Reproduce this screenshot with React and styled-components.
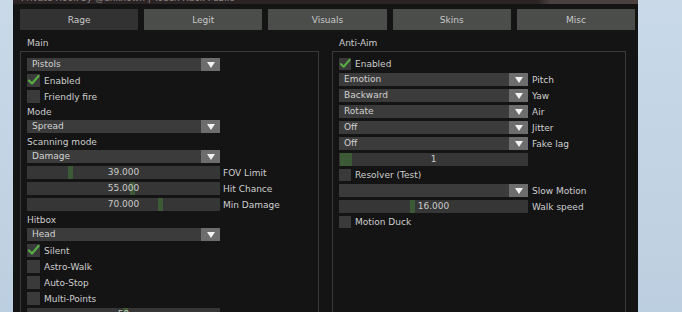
import React from "react";
import styled, { createGlobalStyle } from "styled-components";

const GlobalStyle = createGlobalStyle`
  body {
    margin: 0;
    font-family: "DejaVu Sans", Verdana, sans-serif;
    font-size: 9px;
  }
`;

const TABS = ["Rage", "Legit", "Visuals", "Skins", "Misc"];

export default function App() {
  return (
    <>
      <GlobalStyle />
      <Page>
        <Window>
          <TitleBar>
            <span>Private Hook by @unknown | Touch Hack Public</span>
          </TitleBar>
          <TabBar>
            {TABS.map((t, i) => (
              <Tab key={t} $active={i === 0}>
                {t}
              </Tab>
            ))}
          </TabBar>
          <Columns>
            <Column>
              <GroupTitle>Main</GroupTitle>
              <GroupBox>
                <Combo $w={193} value="Pistols" />
                <CheckBox checked label="Enabled" />
                <CheckBox label="Friendly fire" />
                <FieldLabel>Mode</FieldLabel>
                <Combo $w={193} value="Spread" />
                <FieldLabel>Scanning mode</FieldLabel>
                <Combo $w={193} value="Damage" />
                <Row $gap={3}>
                  <Slider $w={193} thumb={41} value="39.000" />
                  <SideLabel>FOV Limit</SideLabel>
                </Row>
                <Row $gap={3}>
                  <Slider $w={193} thumb={103} value="55.000" />
                  <SideLabel>Hit Chance</SideLabel>
                </Row>
                <Row $gap={3}>
                  <Slider $w={193} thumb={131} value="70.000" />
                  <SideLabel>Min Damage</SideLabel>
                </Row>
                <FieldLabel>Hitbox</FieldLabel>
                <Combo $w={193} value="Head" />
                <CheckBox checked label="Silent" />
                <CheckBox label="Astro-Walk" />
                <CheckBox label="Auto-Stop" />
                <CheckBox label="Multi-Points" />
                <Slider $w={193} thumb={96} value="50" />
              </GroupBox>
            </Column>
            <Column>
              <GroupTitle>Anti-Aim</GroupTitle>
              <GroupBox>
                <CheckBox checked size={12} label="Enabled" />
                <Row $gap={4}>
                  <Combo $w={189} value="Emotion" />
                  <SideLabel>Pitch</SideLabel>
                </Row>
                <Row $gap={4}>
                  <Combo $w={189} value="Backward" />
                  <SideLabel>Yaw</SideLabel>
                </Row>
                <Row $gap={4}>
                  <Combo $w={189} value="Rotate" />
                  <SideLabel>Air</SideLabel>
                </Row>
                <Row $gap={4}>
                  <Combo $w={189} value="Off" />
                  <SideLabel>Jitter</SideLabel>
                </Row>
                <Row $gap={4}>
                  <Combo $w={189} value="Off" />
                  <SideLabel>Fake lag</SideLabel>
                </Row>
                <Slider $w={189} thumb={1} thumbW={12} value="1" />
                <CheckBox size={12} label="Resolver (Test)" />
                <Row $gap={4}>
                  <Combo $w={189} value="" />
                  <SideLabel>Slow Motion</SideLabel>
                </Row>
                <Row $gap={4}>
                  <Slider $w={189} thumb={71} value="16.000" />
                  <SideLabel>Walk speed</SideLabel>
                </Row>
                <CheckBox size={12} label="Motion Duck" />
              </GroupBox>
            </Column>
          </Columns>
        </Window>
      </Page>
    </>
  );
}

function Combo({ $w, value }) {
  return (
    <ComboBox $w={$w}>
      <ComboText>{value}</ComboText>
      <ArrowBox>
        <Triangle />
      </ArrowBox>
    </ComboBox>
  );
}

function Slider({ $w, thumb, thumbW = 5, value }) {
  return (
    <SliderTrack $w={$w}>
      <Thumb style={{ left: thumb, width: thumbW }} />
      <SliderValue>{value}</SliderValue>
    </SliderTrack>
  );
}

function CheckBox({ checked, label, size = 13 }) {
  return (
    <Row $gap={4} $h={size}>
      <Box $size={size}>
        {checked && (
          <svg width={size} height={size} viewBox="0 0 13 13">
            <path
              d="M2 6.5 L5 9.5 L11.5 2"
              fill="none"
              stroke="#58ad45"
              strokeWidth="2.2"
              strokeLinecap="round"
              strokeLinejoin="round"
            />
          </svg>
        )}
      </Box>
      <SideLabel>{label}</SideLabel>
    </Row>
  );
}

const Page = styled.div`
  width: 682px;
  height: 312px;
  overflow: hidden;
  display: flex;
  background: linear-gradient(180deg, #c9d9e8 0%, #bccfe0 100%);
`;

const Window = styled.div`
  margin-left: 13px;
  width: 625px;
  height: 340px;
  background: #141414;
  display: flex;
  flex-direction: column;
  flex-shrink: 0;
`;

const TitleBar = styled.div`
  height: 4px;
  overflow: hidden;
  background: linear-gradient(90deg, #2c2424 0%, #2c2424 84%, #4a4040 86%, #4a4040 100%);
  color: #8e8a8a;
  padding-left: 8px;
  > span {
    display: block;
    margin-top: -7px;
    line-height: 11px;
  }
`;

const TabBar = styled.div`
  display: grid;
  grid-template-columns: repeat(5, 1fr);
  gap: 6px;
  padding: 5px 3px 0 7px;
`;

const Tab = styled.div`
  height: 21px;
  display: flex;
  align-items: center;
  justify-content: center;
  background: ${(p) => (p.$active ? "#323232" : "#4a4d49")};
  color: #c9c9c9;
`;

const Columns = styled.div`
  display: grid;
  grid-template-columns: 299px 294px;
  column-gap: 13px;
  padding-left: 7px;
  margin-top: 6px;
  flex: 1;
`;

const Column = styled.div`
  display: flex;
  flex-direction: column;
`;

const GroupTitle = styled.div`
  height: 15px;
  line-height: 14px;
  padding-left: 7px;
  color: #cdcdcd;
`;

const GroupBox = styled.div`
  flex: 1;
  border: 1px solid #3a3a3a;
  border-bottom: none;
  padding: 6px 0 0 6px;
  display: flex;
  flex-direction: column;
  gap: 3px;
`;

const Row = styled.div`
  display: flex;
  align-items: center;
  gap: ${(p) => p.$gap}px;
  height: ${(p) => p.$h || 13}px;
`;

const FieldLabel = styled.div`
  height: 11px;
  line-height: 12px;
  color: #cdcdcd;
`;

const SideLabel = styled.span`
  color: #cfcfcf;
  white-space: nowrap;
`;

const ComboBox = styled.div`
  width: ${(p) => p.$w}px;
  height: 13px;
  flex-shrink: 0;
  display: flex;
  background: #3b3b3b;
`;

const ComboText = styled.span`
  flex: 1;
  padding-left: 5px;
  line-height: 13px;
  color: #d2d2d2;
`;

const ArrowBox = styled.div`
  width: 19px;
  display: flex;
  align-items: center;
  justify-content: center;
  background: #6d6d6d;
`;

const Triangle = styled.div`
  width: 0;
  height: 0;
  border-left: 4px solid transparent;
  border-right: 4px solid transparent;
  border-top: 6px solid #f2f2f2;
`;

const SliderTrack = styled.div`
  position: relative;
  width: ${(p) => p.$w}px;
  height: 13px;
  flex-shrink: 0;
  background: #363636;
`;

const Thumb = styled.div`
  position: absolute;
  top: 0;
  height: 13px;
  background: #3d5a36;
`;

const SliderValue = styled.span`
  position: relative;
  display: block;
  text-align: center;
  line-height: 13px;
  color: #cbcbcb;
`;

const Box = styled.div`
  width: ${(p) => p.$size}px;
  height: ${(p) => p.$size}px;
  flex-shrink: 0;
  background: #3a3a3a;
`;
